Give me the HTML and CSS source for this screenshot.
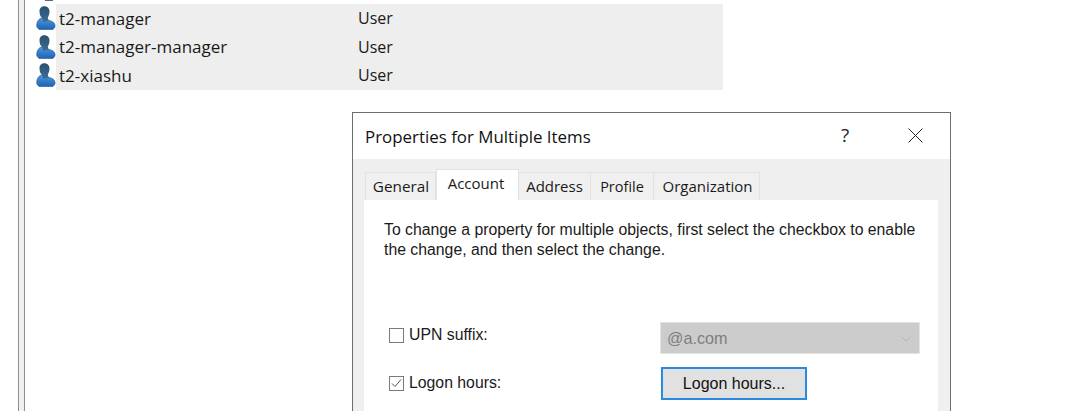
FILE: index.html
```html
<!DOCTYPE html>
<html lang="en">
<head>
<meta charset="utf-8">
<title>Properties for Multiple Items</title>
<link rel="stylesheet" href="styles.css">
</head>
<body>
<svg class="defs" width="0" height="0">
  <defs>
    <linearGradient id="body" x1="0" y1="0" x2="0" y2="1"><stop offset="0" stop-color="#4f97e0"/><stop offset="1" stop-color="#1e63b0"/></linearGradient>
    <linearGradient id="head" x1="0" y1="0" x2="0" y2="1"><stop offset="0" stop-color="#2b5170"/><stop offset="1" stop-color="#3d6c92"/></linearGradient>
    <g id="user">
      <path d="M.8 21c-.5-4 1-7.500 4.200-9l5.500 1.500 4.500 1.500c3 1 4.500 3 4 6l-2 2.500H3z" fill="url(#body)" stroke="#1c5a9e" stroke-width=".6"/>
      <path d="M3.500 5c0-3 2.200-4.800 5-4.800S13.500 2.500 13.500 5c0 3-.7 5-1.700 6.500l.7 3-5 1.500-1.500-4C4 10 3.500 8 3.500 5z" fill="url(#head)"/>
    </g>
  </defs>
</svg>

<div class="frame">
  <div class="rail"></div>
  <div class="pane">
    <div class="top-stub"><span class="stub-mark"></span></div>
    <div class="list">
      <div class="row">
        <svg class="icon" viewBox="0 0 20 24"><use href="#user"/></svg>
        <div class="cells"><span class="name">t2-manager</span><span class="type">User</span></div>
      </div>
      <div class="row">
        <svg class="icon" viewBox="0 0 20 24"><use href="#user"/></svg>
        <div class="cells"><span class="name">t2-manager-manager</span><span class="type">User</span></div>
      </div>
      <div class="row">
        <svg class="icon" viewBox="0 0 20 24"><use href="#user"/></svg>
        <div class="cells"><span class="name">t2-xiashu</span><span class="type">User</span></div>
      </div>
    </div>
  </div>
</div>

<div class="dialog">
  <div class="titlebar">
    <span class="title">Properties for Multiple Items</span>
    <span class="help">?</span>
    <svg class="close" viewBox="0 0 15 15"><path d="M.5.500l14 14M14.500.500l-14 14" stroke="#222" stroke-width="1" fill="none"/></svg>
  </div>
  <div class="body">
    <div class="tabs">
      <span class="tab tab-general">General</span>
      <span class="tab tab-active">Account</span>
      <span class="tab tab-address">Address</span>
      <span class="tab tab-profile">Profile</span>
      <span class="tab tab-org">Organization</span>
    </div>
    <div class="page">
      <p class="intro">To change a property for multiple objects, first select the checkbox to enable the change, and then select the change.</p>
      <div class="field field-upn">
        <label class="check"><span class="box"></span>UPN suffix:</label>
        <div class="combo"><span>@a.com</span>
          <svg class="chev" viewBox="0 0 10 6"><path d="M.5.500L5 5 9.500.500" stroke="#b4b4b4" fill="none"/></svg>
        </div>
      </div>
      <div class="field field-hours">
        <label class="check"><span class="box"><svg viewBox="0 0 13 13"><path d="M2 6.500l3 3 6-7" stroke="#555" fill="none"/></svg></span>Logon hours:</label>
        <button class="btn" type="button">Logon hours...</button>
      </div>
    </div>
  </div>
</div>
</body>
</html>
```
FILE: styles.css
```css
* { box-sizing: border-box; }
html, body { margin: 0; height: 100%; }
body {
  width: 1066px; height: 411px; overflow: hidden; position: relative;
  background: #fff; color: #1a1a1a;
  font-family: "Liberation Sans", Arial, sans-serif; font-size: 15px;
}
.frame { display: flex; height: 411px; padding-left: 18px; }
.rail { width: 7px; background: #f0f0f0; border-left: 1px solid #8f8f8f; border-right: 1px solid #8f8f8f; }
.pane { flex: none; width: 698px; }
.top-stub { height: 4px; padding-left: 20px; }
.stub-mark { display: block; width: 8px; height: 1px; background: #5a6a78; }
.list { margin-left: 11px; }
.row { display: flex; height: 28.500px; align-items: center; }
.icon { flex: none; width: 20px; height: 24px; }
.cells { flex: 1; height: 100%; display: flex; align-items: center; padding-left: 3px; background: #eeeeee; }
.name { width: 299px; font-family: "Open Sans", sans-serif; font-size: 17px; }
.type { font-family: "Open Sans", sans-serif; font-size: 16px; }
.defs { position: absolute; }

.dialog {
  position: absolute; left: 352px; top: 112px; width: 599px; height: 299px;
  background: #efefef; border: 1px solid #6e6e6e; border-bottom: none;
  overflow: hidden;
}
.titlebar { height: 46px; background: #fff; display: flex; align-items: center; padding-left: 12px; position: relative; }
.title { font-family: "Open Sans", sans-serif; font-size: 16.900px; color: #111; }
.help { position: absolute; left: 488px; top: 9px; font-family: "Open Sans", sans-serif; font-size: 19px; color: #222; }
.close { position: absolute; left: 555px; top: 15px; width: 15px; height: 15px; }
.body { padding: 10px 12px 0 11px; }
.tabs { display: flex; height: 31px; align-items: flex-end; padding-left: 1px; font-family: "Open Sans", sans-serif; font-size: 15px; }
.tab { height: 28px; display: flex; align-items: center; justify-content: center; background: #f0f0f0; border: 1px solid #e2e2e2; border-bottom: none; border-left: none; padding-bottom: 1px; }
.tab-general { width: 71px; border-left: 1px solid #e2e2e2; font-size: 15.300px; padding-left: 1px; }
.tab-active { width: 83px; height: 31px; background: #fff; border-left: 1px solid #e2e2e2; padding-bottom: 5px; padding-right: 3px; }
.tab-address { width: 72px; }
.tab-profile { width: 63px; font-size: 14.500px; }
.tab-org { width: 106px; padding-left: 2px; }
.page { background: #fff; width: 574px; height: 220px; padding: 20px 18px 0 20px; }
.intro { margin: 0; font-size: 15.800px; line-height: 20px; font-family: "Liberation Sans", sans-serif; width: 540px; }
.field { display: flex; align-items: flex-start; }
.field-upn { margin-top: 62px; }
.field-hours { margin-top: 13px; }
.check { display: flex; align-items: center; width: 276px; font-size: 15.800px; margin-left: 5px; margin-top: 4px; }
.field-hours .check { margin-top: 7px; }
.box { width: 15px; height: 15px; border: 1px solid #7a7a7a; background: #fff; margin-right: 5px; display: flex; }
.box svg { width: 13px; height: 13px; }
.combo { width: 260px; height: 32px; background: #cccccc; border: 1px solid #e4e4e4; color: #7e7e7e; font-size: 16.200px; display: flex; align-items: center; justify-content: space-between; padding: 1px 8px 0 6px; margin-left: -5px; }
.chev { width: 10px; height: 6px; }
.btn { width: 146px; height: 33px; margin-left: -4px; background: #e1e1e1; border: 2px solid #2a8ae0; font: inherit; font-size: 16px; color: #111; padding: 0; }
```
